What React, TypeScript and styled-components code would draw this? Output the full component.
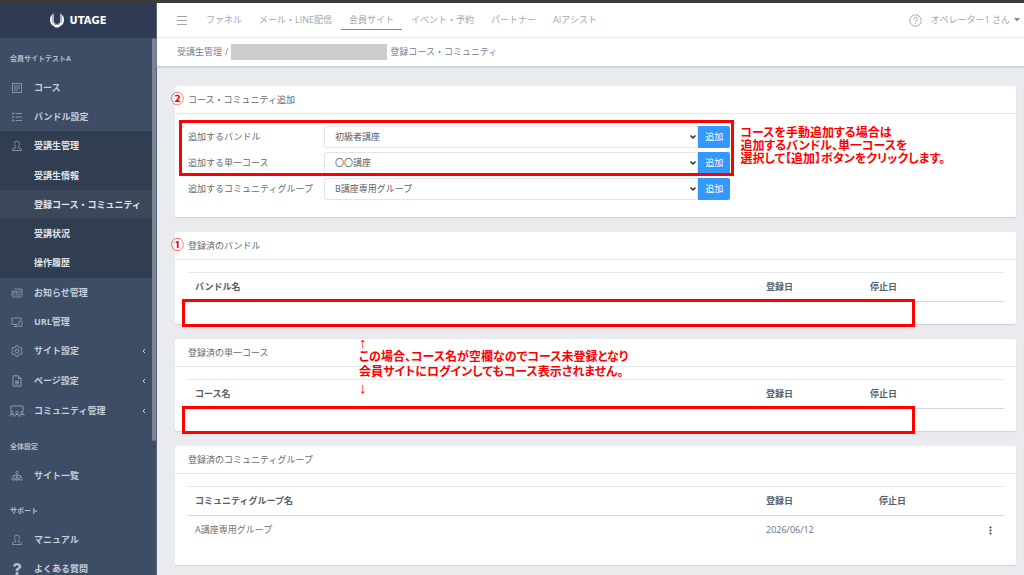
import React from "react";
import styled, { createGlobalStyle, css } from "styled-components";
import { ChevronDown } from "lucide-react";
import { FaQuestion } from "react-icons/fa";

const GlobalStyle = createGlobalStyle`
  *, *::before, *::after { box-sizing: border-box; }
  body {
    margin: 0;
    background: #e9ebee;
    color: #666a70;
    font-family: "Open Sans", "Noto Sans CJK JP", sans-serif;
    font-size: 9px;
    line-height: 14px;
  }
  ul { list-style: none; margin: 0; padding: 0; }
  h1, h2, h3, p { margin: 0; font-size: inherit; font-weight: inherit; }
  a { color: inherit; text-decoration: none; }
  button, select { font: inherit; }
`;

const Page = styled.div`
  display: grid;
  grid-template-columns: 157px minmax(0, 1fr);
  height: 100vh;
  overflow: hidden;
  border-top: 3px solid #3c3c3c;
`;

/* ---------- sidebar ---------- */

const Sidebar = styled.aside`
  display: flex;
  flex-direction: column;
  min-height: 0;
  background: #3d4d65;
  border-right: 1px solid #56657c;
  color: #c6cdd8;
`;

const Brand = styled.a`
  display: flex;
  flex: none;
  align-items: center;
  justify-content: center;
  gap: 6px;
  height: 35px;
  background: #2f3b54;
  color: #fff;
  font-family: "DejaVu Sans", sans-serif;
  font-size: 10px;
  font-weight: 700;
`;

const SidebarBody = styled.nav`
  position: relative;
  flex: 1;
  min-height: 0;
  overflow: hidden;
`;

const ScrollThumb = styled.div`
  position: absolute;
  top: 0;
  right: 0;
  width: 4px;
  height: 75%;
  border-radius: 2px;
  background: #7c8493;
`;

const SectionTitle = styled.h3`
  display: flex;
  align-items: flex-end;
  height: 35px;
  padding: 0 10px 7px;
  font-size: 7px;
  font-weight: 700;
  color: #b4bdca;
`;

const MenuGroup = styled.ul`
  padding-bottom: 1px;
  background: #313d50;
  color: #e2e6ec;
`;

const MenuLink = styled.a<{ $parent?: boolean; $current?: boolean }>`
  display: grid;
  grid-template-columns: 18px 1fr 8px;
  column-gap: 8px;
  align-items: center;
  height: ${(p) => (p.$parent ? 30 : 29)}px;
  padding: 0 6px 0 8px;
  font-weight: 700;
  white-space: nowrap;
  ${(p) => p.$current && css`background: #3c475a;`}
`;

const MenuIcon = styled.span`
  display: flex;
  justify-content: center;
  color: #8e9aac;
`;

/* ---------- top bars ---------- */

const Main = styled.div`
  display: flex;
  flex-direction: column;
  min-width: 0;
`;

const TopBar = styled.header`
  display: flex;
  flex: none;
  align-items: center;
  height: 35px;
  padding: 0 4px 0 20px;
  background: #fff;
  border-bottom: 1px solid #e8eaec;
  color: #a3a5ae;
`;

const IconButton = styled.button`
  display: flex;
  padding: 0;
  border: 0;
  background: none;
  color: inherit;
`;

const TopNav = styled.nav`
  display: flex;
  gap: 1px;
  margin-left: 11px;
`;

const TopLink = styled.a<{ $current?: boolean }>`
  padding: 3px 8px 2px;
  border-bottom: 1px solid ${(p) => (p.$current ? "#3f9af5" : "transparent")};
  white-space: nowrap;
`;

const UserArea = styled.div`
  display: flex;
  align-items: center;
  gap: 9px;
  margin-left: auto;
`;

const UserButton = styled(IconButton)`
  align-items: center;
  gap: 4px;
  white-space: nowrap;
`;

const Breadcrumb = styled.nav`
  display: flex;
  flex: none;
  align-items: center;
  gap: 3px;
  height: 29px;
  padding: 0 20px;
  background: #fff;
  border-bottom: 1px solid #c8ced9;
  box-shadow: 0 1px 1px #d6dae2;
  color: #748195;
`;

const MaskedName = styled.span`
  width: 156px;
  height: 16px;
  background: #ccc;
`;

/* ---------- content ---------- */

const Content = styled.main`
  display: flex;
  flex-direction: column;
  gap: 15px;
  padding: 19px 8px 10px 18px;
`;

const Card = styled.section`
  position: relative;
  background: #fff;
  border-radius: 2px;
  box-shadow: 0 1px 1px #ced2d8;
`;

const CardTitle = styled.h2`
  position: relative;
  height: 28px;
  padding: 7px 13px 6px;
  border-bottom: 1px solid #e6e8ed;
`;

const CardBody = styled.div<{ $bottom: number }>`
  padding: 12px 12px ${(p) => p.$bottom}px;
`;

const FormRows = styled.div`
  position: relative;
  display: grid;
  gap: 4px;
  width: calc(67% - 4px);
  margin-bottom: 4px;
`;

const FormRow = styled.div`
  display: grid;
  grid-template-columns: 137px minmax(0, 1fr) 32px;
  align-items: center;
  height: 22px;

  label { padding-left: 1px; white-space: nowrap; }
`;

const SelectBox = styled.div`
  position: relative;

  select {
    display: block;
    width: 100%;
    height: 22px;
    padding: 0 16px 0 10px;
    border: 1px solid #e3e6e9;
    border-radius: 2px 0 0 2px;
    background: #fff;
    color: #5c6066;
    appearance: none;
  }
  svg {
    position: absolute;
    top: 7px;
    right: 1px;
    color: #333;
    pointer-events: none;
  }
`;

const AddButton = styled.button`
  height: 22px;
  padding: 0;
  border: 0;
  border-radius: 0 2px 2px 0;
  background: #3598fe;
  color: #fff;
`;

const Table = styled.table`
  width: 100%;
  table-layout: fixed;
  border-collapse: separate;
  border-spacing: 0;

  th, td { padding: 7px 8px; text-align: left; }
  th {
    border-top: 1px solid #e6e8ea;
    border-bottom: 1px solid #d5d8dc;
    color: #55606e;
    font-weight: 700;
  }
  td { color: #6b7178; }
`;

const Col = styled.col<{ $w?: number }>`
  width: ${(p) => (p.$w ? `${p.$w}px` : "auto")};
`;

const KebabButton = styled(IconButton)`
  width: 100%;
  justify-content: center;
  color: #444;
`;

/* ---------- red notes over the cards ---------- */

const Badge = styled.span`
  position: absolute;
  top: 5px;
  left: -4px;
  color: #f00;
  font-family: "Noto Sans CJK JP", sans-serif;
  font-size: 13px;
  font-weight: 700;
`;

const Frame = styled.div<{ $inset: string }>`
  position: absolute;
  inset: ${(p) => p.$inset};
  border: 3px solid #f00;
  pointer-events: none;
`;

const Note = styled.p<{ $top: number; $left: string; $line: number }>`
  position: absolute;
  z-index: 1;
  top: ${(p) => p.$top}px;
  left: ${(p) => p.$left};
  color: #f00;
  font-family: "Liberation Sans", "Noto Sans CJK JP", sans-serif;
  font-size: 12px;
  font-weight: 700;
  font-feature-settings: "palt";
  line-height: ${(p) => p.$line}px;
  white-space: nowrap;
`;

const Arrow = styled.span`
  display: block;
  height: 15px;
  font-size: 15px;
`;

/* ---------- icons ---------- */

const Icon = ({ w = 12, h = 12, sw = 1, children }: { w?: number; h?: number; sw?: number; children: React.ReactNode }) => (
  <svg width={w} height={h} viewBox={`0 0 ${w} ${h}`} fill="none" stroke="currentColor" strokeWidth={sw} aria-hidden="true">
    {children}
  </svg>
);

const CourseIcon = () => (
  <Icon sw={0.9}>
    <rect x="1.5" y="1.5" width="9" height="9" />
    <path d="M3 4h6M3 6h6M3 8h4" />
  </Icon>
);
const ListIcon = () => (
  <Icon sw={0.9}>
    <path d="M4.5 2.5H11M4.5 6H11M4.5 9.5H11M1 2.5h2M1 6h2M1 9.5h2M2 1.5v2M2 5v2M2 8.500v2" />
  </Icon>
);
const PersonIcon = () => (
  <Icon sw={0.9}>
    <path d="M4.700 6.700C3.700 5.800 3.500 4.600 3.500 3.600a2.500 2.500 0 0 1 5 0c0 1-.2 2.200-1.200 3.100v1l2.500.900c.6.200.8.700.8 1.900H1.400c0-1.200.2-1.700.8-1.900l2.500-.9z" />
  </Icon>
);
const NewsIcon = () => (
  <Icon sw={0.9}>
    <path d="M3 2h8v6.500a1.500 1.500 0 0 1-1.500 1.500h-7A1.500 1.500 0 0 1 1 8.500V4h2v4.500M4.700 4.200h2v1.600h-2zM8 4h1.800M8 5.800h1.800M4.700 7.800h5" />
  </Icon>
);
const DevicesIcon = () => (
  <Icon sw={0.9}>
    <path d="M7 8.500H1V2h9v2M3 10.500h4M5 8.500v2" />
    <rect x="8" y="5" width="3" height="5.500" rx=".5" />
  </Icon>
);
const GearIcon = () => (
  <Icon>
    <path d="M4.900.8h2.200l.4 1.400 1.200.7 1.500-.4 1 1.900-1 1.100v1l1 1.100-1 1.900-1.500-.4-1.200.7-.4 1.400H4.900l-.4-1.400-1.200-.7-1.500.4-1-1.900 1-1.100v-1l-1-1.100 1-1.900 1.500.4 1.200-.7z" />
    <circle cx="6" cy="6" r="1.800" />
  </Icon>
);
const FileIcon = () => (
  <Icon>
    <path d="M2 .8h5.500L10 3.300v7.900H2zM7.300.8v2.700H10M4 6h4M4 7.500h4M4 9h4" />
  </Icon>
);
const CommunityIcon = () => (
  <Icon w={16} h={12}>
    <path d="M2 6V1h12v5M1 11.500V10.500a1 1 0 0 1 1-1h2a1 1 0 0 1 1 1v1M6 11.500V10.500a1 1 0 0 1 1-1h2a1 1 0 0 1 1 1v1M11 11.500V10.500a1 1 0 0 1 1-1h2a1 1 0 0 1 1 1v1" />
    <circle cx="3" cy="7.500" r="1.300" />
    <circle cx="8" cy="7.500" r="1.300" />
    <circle cx="13" cy="7.500" r="1.300" />
  </Icon>
);
const SitemapIcon = () => (
  <Icon sw={0.9}>
    <circle cx="6" cy="2.500" r="1.200" />
    <path d="M6 3.700V10M2.300 7V5.500h7.400V7M1 10V8.500a1.300 1.300 0 0 1 2.600 0V10zM4.700 10V8.500a1.300 1.300 0 0 1 2.600 0V10zM8.400 10V8.500a1.300 1.300 0 0 1 2.600 0V10z" />
  </Icon>
);
const Chevron = () => (
  <Icon w={4} h={6}>
    <path d="M3 1 1 3l2 2" />
  </Icon>
);

type Item = { label: string; icon?: React.ReactNode; parent?: boolean; current?: boolean; chevron?: boolean };

const MenuItem = ({ label, icon, parent, current, chevron }: Item) => (
  <li>
    <MenuLink href="#" $parent={parent} $current={current} aria-current={current ? "page" : undefined}>
      <MenuIcon>{icon}</MenuIcon>
      <span>{label}</span>
      {chevron && <Chevron />}
    </MenuLink>
  </li>
);

const topLinks = ["ファネル", "メール・LINE配信", "会員サイト", "イベント・予約", "パートナー", "AIアシスト"];

const selects = [
  { id: "bundle", label: "追加するバンドル", value: "初級者講座" },
  { id: "course", label: "追加する単一コース", value: "〇〇講座" },
  { id: "group", label: "追加するコミュニティグループ", value: "B講座専用グループ" },
];

const EmptyTable = ({ name }: { name: string }) => (
  <Table>
    <colgroup>
      <Col />
      <Col $w={104} />
      <Col $w={142} />
    </colgroup>
    <thead>
      <tr>
        <th>{name}</th>
        <th>登録日</th>
        <th>停止日</th>
      </tr>
    </thead>
  </Table>
);

export default function App() {
  return (
    <>
      <GlobalStyle />
      <Page lang="ja">
        <Sidebar>
          <Brand href="#">
            <svg width="14" height="15" viewBox="0 0 14 15" aria-hidden="true">
              <path
                fill="#fff"
                d="M3.600.6v6.900a3.400 3.400 0 0 0 6.800 0V.6A7.200 7.200 0 0 1 14 7c0 3-1.600 5.300-4 6.200L8.500 14.500h-3L4 13.200C1.600 12.300 0 10 0 7A7.200 7.200 0 0 1 3.600.6z"
              />
              <path fill="none" stroke="#2f3b54" strokeWidth=".5" d="M2.300 1.600v7.200L5 11.500h4l2.700-2.700V1.600" />
            </svg>
            UTAGE
          </Brand>
          <SidebarBody>
            <SectionTitle>会員サイトテストA</SectionTitle>
            <ul>
              <MenuItem label="コース" icon={<CourseIcon />} />
              <MenuItem label="バンドル設定" icon={<ListIcon />} />
            </ul>
            <MenuGroup>
              <MenuItem label="受講生管理" icon={<PersonIcon />} parent />
              <MenuItem label="受講生情報" />
              <MenuItem label="登録コース・コミュニティ" current />
              <MenuItem label="受講状況" />
              <MenuItem label="操作履歴" />
            </MenuGroup>
            <ul>
              <MenuItem label="お知らせ管理" icon={<NewsIcon />} />
              <MenuItem label="URL管理" icon={<DevicesIcon />} />
              <MenuItem label="サイト設定" icon={<GearIcon />} parent chevron />
              <MenuItem label="ページ設定" icon={<FileIcon />} parent chevron />
              <MenuItem label="コミュニティ管理" icon={<CommunityIcon />} parent chevron />
            </ul>
            <SectionTitle>全体設定</SectionTitle>
            <ul>
              <MenuItem label="サイト一覧" icon={<SitemapIcon />} />
            </ul>
            <SectionTitle>サポート</SectionTitle>
            <ul>
              <MenuItem label="マニュアル" icon={<PersonIcon />} />
              <MenuItem label="よくある質問" icon={<FaQuestion size={12} color="#b4bdca" />} />
            </ul>
            <ScrollThumb />
          </SidebarBody>
        </Sidebar>

        <Main>
          <TopBar>
            <IconButton type="button" aria-label="メニュー">
              <Icon w={10} h={10}>
                <path d="M0 1.500h10M0 5.500h10M0 9.500h10" />
              </Icon>
            </IconButton>
            <TopNav>
              {topLinks.map((label) => (
                <TopLink key={label} href="#" $current={label === "会員サイト"}>
                  {label}
                </TopLink>
              ))}
            </TopNav>
            <UserArea>
              <IconButton type="button" aria-label="ヘルプ">
                <Icon w={13} h={13}>
                  <circle cx="6.500" cy="6.500" r="5.700" />
                  <path d="M4.800 5.200a1.700 1.700 0 1 1 2.600 1.400c-.6.400-.9.700-.9 1.300M6.500 8.900v1" />
                </Icon>
              </IconButton>
              <UserButton type="button">
                オペレーター1 さん
                <svg width="6" height="4" viewBox="0 0 6 4" fill="#858994" aria-hidden="true">
                  <path d="M0 0h6L3 3.500z" />
                </svg>
              </UserButton>
            </UserArea>
          </TopBar>
          <Breadcrumb aria-label="パンくず">
            <a href="#">受講生管理</a>
            <span>/</span>
            <MaskedName />
            <span>登録コース・コミュニティ</span>
          </Breadcrumb>

          <Content>
            <Card>
              <CardTitle>
                <Badge>②</Badge>
                コース・コミュニティ追加
              </CardTitle>
              <CardBody $bottom={13}>
                <FormRows>
                  {selects.map((s) => (
                    <FormRow key={s.id}>
                      <label htmlFor={s.id}>{s.label}</label>
                      <SelectBox>
                        <select id={s.id} defaultValue={s.value}>
                          <option>{s.value}</option>
                        </select>
                        <ChevronDown size={8} strokeWidth={5} />
                      </SelectBox>
                      <AddButton type="button">追加</AddButton>
                    </FormRow>
                  ))}
                  <Frame $inset="-6px -4px 24px -8px" />
                  <Note $top={1} $left="calc(100% + 10px)" $line={13}>
                    コースを手動追加する場合は
                    <br />
                    追加するバンドル、単一コースを
                    <br />
                    選択して【追加】ボタンをクリックします。
                  </Note>
                </FormRows>
              </CardBody>
            </Card>

            <Card>
              <CardTitle>
                <Badge>①</Badge>
                登録済のバンドル
              </CardTitle>
              <CardBody $bottom={22}>
                <EmptyTable name="バンドル名" />
              </CardBody>
              <Frame $inset="67px 101px -3px 7px" />
              <Note $top={103} $left="184px" $line={15}>
                <Arrow>↑</Arrow>
                この場合、コース名が空欄なのでコース未登録となり
                <br />
                会員サイトにログインしてもコース表示されません。
                <Arrow>↓</Arrow>
              </Note>
            </Card>

            <Card>
              <CardTitle>登録済の単一コース</CardTitle>
              <CardBody $bottom={22}>
                <EmptyTable name="コース名" />
              </CardBody>
              <Frame $inset="67px 101px -3px 7px" />
            </Card>

            <Card>
              <CardTitle>登録済のコミュニティグループ</CardTitle>
              <CardBody $bottom={21}>
                <Table>
                  <colgroup>
                    <Col />
                    <Col $w={113} />
                    <Col $w={105} />
                    <Col $w={28} />
                  </colgroup>
                  <thead>
                    <tr>
                      <th>コミュニティグループ名</th>
                      <th>登録日</th>
                      <th>停止日</th>
                      <th />
                    </tr>
                  </thead>
                  <tbody>
                    <tr>
                      <td>A講座専用グループ</td>
                      <td>2026/06/12</td>
                      <td />
                      <td>
                        <KebabButton type="button" aria-label="操作">
                          <svg width="3" height="9" viewBox="0 0 3 9" fill="currentColor" aria-hidden="true">
                            <circle cx="1.500" cy="1.500" r="1.100" />
                            <circle cx="1.500" cy="4.500" r="1.100" />
                            <circle cx="1.500" cy="7.500" r="1.100" />
                          </svg>
                        </KebabButton>
                      </td>
                    </tr>
                  </tbody>
                </Table>
              </CardBody>
            </Card>
          </Content>
        </Main>
      </Page>
    </>
  );
}
